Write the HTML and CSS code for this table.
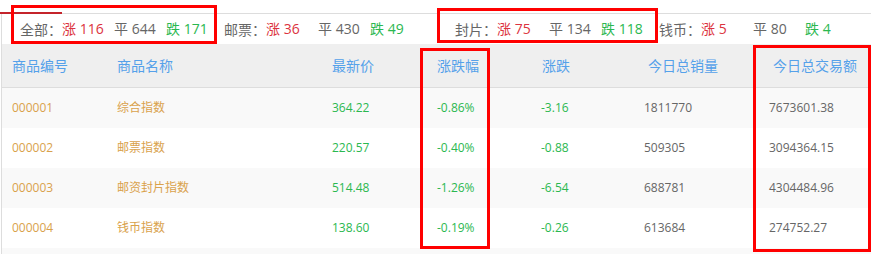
FILE: index.html
```html
<!DOCTYPE html>
<html lang="zh">
<head>
<meta charset="utf-8">
<link rel="stylesheet" href="styles.css">
</head>
<body>
<div class="page">
  <div class="tabbar"><span class="tab-active"></span></div>
  <div class="panel">
    <div class="summary">
      <div class="group group-a"><span class="label">全部：</span><span class="item up">涨 116</span><span class="item flat">平 644</span><span class="item down">跌 171</span></div>
      <div class="group group-b"><span class="label">邮票：</span><span class="item up">涨 36</span><span class="item flat">平 430</span><span class="item down">跌 49</span></div>
      <div class="group group-a"><span class="label">封片：</span><span class="item up">涨 75</span><span class="item flat">平 134</span><span class="item down">跌 118</span></div>
      <div class="group"><span class="label">钱币：</span><span class="item up">涨 5</span><span class="item flat">平 80</span><span class="item down">跌 4</span></div>
    </div>
    <div class="grid">
      <div class="row head">
        <div class="cell">商品编号</div>
        <div class="cell">商品名称</div>
        <div class="cell">最新价</div>
        <div class="cell">涨跌幅</div>
        <div class="cell c5">涨跌</div>
        <div class="cell c6">今日总销量</div>
        <div class="cell c7">今日总交易额</div>
      </div>
      <div class="row odd">
        <div class="cell gold">000001</div>
        <div class="cell gold">综合指数</div>
        <div class="cell green">364.22</div>
        <div class="cell green">-0.86%</div>
        <div class="cell green">-3.16</div>
        <div class="cell gray">1811770</div>
        <div class="cell gray">7673601.38</div>
      </div>
      <div class="row">
        <div class="cell gold">000002</div>
        <div class="cell gold">邮票指数</div>
        <div class="cell green">220.57</div>
        <div class="cell green">-0.40%</div>
        <div class="cell green">-0.88</div>
        <div class="cell gray">509305</div>
        <div class="cell gray">3094364.15</div>
      </div>
      <div class="row odd">
        <div class="cell gold">000003</div>
        <div class="cell gold">邮资封片指数</div>
        <div class="cell green">514.48</div>
        <div class="cell green">-1.26%</div>
        <div class="cell green">-6.54</div>
        <div class="cell gray">688781</div>
        <div class="cell gray">4304484.96</div>
      </div>
      <div class="row">
        <div class="cell gold">000004</div>
        <div class="cell gold">钱币指数</div>
        <div class="cell green">138.60</div>
        <div class="cell green">-0.19%</div>
        <div class="cell green">-0.26</div>
        <div class="cell gray">613684</div>
        <div class="cell gray">274752.27</div>
      </div>
      <div class="row odd"></div>
    </div>
  </div>
  <div class="mark mark-1"></div>
  <div class="mark mark-2"></div>
  <div class="mark mark-3"></div>
  <div class="mark mark-4"></div>
</div>
</body>
</html>
```
FILE: styles.css
```css
* { box-sizing: border-box; }
html, body { margin: 0; padding: 0; background: #fff; }
body {
  font-family: "Open Sans", "Noto Sans CJK SC", sans-serif;
  color: #666;
  overflow: hidden;
}
.page { position: relative; width: 871px; height: 254px; overflow: hidden; }

.tabbar {
  height: 14px;
  border-bottom: 1px solid #dddddd;
  display: flex;
  align-items: flex-end;
}
.tab-active {
  display: block;
  width: 62px;
  height: 2px;
  margin-bottom: -1px;
  background: #c4242b;
}

.panel {
  margin-left: 1px;
  border-left: 1px solid #dddddd;
}

.summary {
  height: 30px;
  display: flex;
  align-items: center;
  padding-left: 18px;
  font-size: 14px;
  line-height: 20px;
}
.group { display: flex; flex: none; white-space: nowrap; }
.group-a { width: 204px; }
.group-b { width: 231px; }
.label {
  width: 42px;
  color: #666;
  font-family: "Noto Sans CJK TC", "Noto Sans CJK SC", sans-serif;
}
.item { width: 52px; }
.up { color: #dc3340; }
.flat { color: #666; }
.down { color: #2bb850; }

.row {
  display: grid;
  grid-template-columns: 105px 215px 105px 104px 103px 125px 1fr;
  height: 40px;
  align-items: center;
  font-size: 12px;
  background: #fff;
}
.row.odd { background: #f9f9f9; }
.row.head {
  height: 44px;
  background: #efefef;
  border-bottom: 1px solid #dddddd;
  font-size: 14px;
  color: #55a1ea;
}
.cell { padding-left: 10px; white-space: nowrap; line-height: 18px; }
.head .c5 { padding-left: 11px; }
.head .c6 { padding-left: 14px; }
.head .c7 { padding-left: 14px; }
.gold { color: #d9a24c; }
.green { color: #2bb850; }
.gray { color: #666; }

.mark {
  position: absolute;
  border: 3px solid #ff0000;
}
.mark-1 { left: 11px; top: 5px; width: 206px; height: 39px; }
.mark-2 { left: 437px; top: 8px; width: 221px; height: 35px; }
.mark-3 { left: 420px; top: 48px; width: 70px; height: 201px; }
.mark-4 { left: 753px; top: 45px; width: 118px; height: 207px; }
```
